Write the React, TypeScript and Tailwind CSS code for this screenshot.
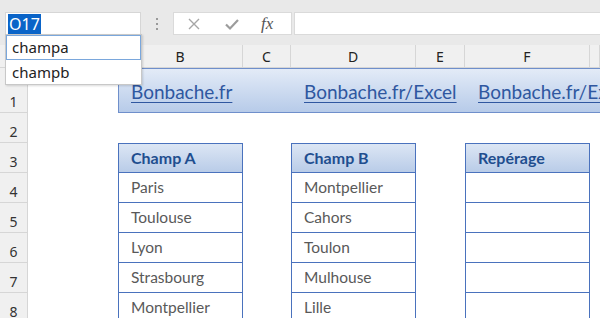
import React from 'react';

const cols = ['A', 'B', 'C', 'D', 'E', 'F', 'G'];
const widths = [90, 125, 48, 125, 49, 125, 10];

const champA = ['Paris', 'Toulouse', 'Lyon', 'Strasbourg', 'Montpellier'];
const champB = ['Montpellier', 'Cahors', 'Toulon', 'Mulhouse', 'Lille'];

const cellFont = { fontFamily: 'Lato, "Noto Sans", sans-serif' };
const uiFont = { fontFamily: '"Noto Sans", "Open Sans", sans-serif' };

function RowHead({ n, h }: { n: number; h: string }) {
  return (
    <div
      className={`w-[28px] shrink-0 ${h} bg-[#f0f0f0] border-b border-r border-[#d6d6d6] flex items-end justify-center text-[14px] leading-[20px] text-[#333]`}
      style={uiFont}
    >
      {n}
    </div>
  );
}

function TableCell({ text, head }: { text?: string; head?: boolean }) {
  if (head) {
    return (
      <div className="w-[125px] h-[30px] border border-[#4a72bd] bg-gradient-to-b from-[#dce6f4] to-[#b9cce8] flex items-center pl-[12px] text-[16px] font-bold text-[#1f4e8f]">
        {text}
      </div>
    );
  }
  return (
    <div className="w-[125px] h-[30px] border-x border-b border-[#4a72bd] flex items-center pl-[12px] text-[15.5px] text-[#595959]">
      {text}
    </div>
  );
}

function Gap({ w }: { w: number }) {
  return <div className="shrink-0" style={{ width: w }} />;
}

export default function App() {
  return (
    <div className="w-[600px] h-[318px] overflow-hidden bg-white relative">
      {/* formula bar */}
      <div className="h-[45px] bg-[#e9e9e9] flex items-start pt-[12px] pl-[5px]">
        <div className="w-[136px] h-[23px] bg-white border border-[#d6d6d6] flex items-center pl-[2px]">
          <span className="bg-[#0a64c8] text-white text-[16px] leading-[20px] px-[1px]" style={uiFont}>
            O17
          </span>
        </div>
        <div className="w-[32px] h-[23px] flex flex-col items-center justify-center gap-[3px]">
          <div className="w-[2px] h-[2px] bg-[#9a9a9a]" />
          <div className="w-[2px] h-[2px] bg-[#9a9a9a]" />
          <div className="w-[2px] h-[2px] bg-[#9a9a9a]" />
        </div>
        <div className="w-[119px] h-[23px] bg-white border border-[#dadada] flex items-center">
          <svg width="14" height="14" viewBox="0 0 14 14" className="ml-[13px]">
            <path d="M2 2 L12 12 M12 2 L2 12" stroke="#a6a6a6" strokeWidth="1.4" fill="none" />
          </svg>
          <svg width="16" height="14" viewBox="0 0 16 14" className="ml-[23px]">
            <path d="M2 7.5 L6 11.5 L14 3" stroke="#9c9c9c" strokeWidth="2.2" fill="none" />
          </svg>
          <span className="ml-[21px] text-[17px] italic text-[#555]" style={{ fontFamily: '"Liberation Serif", serif' }}>
            fx
          </span>
        </div>
        <div className="ml-[2px] flex-1 h-[23px] bg-white border-y border-l border-[#dadada]" />
      </div>

      {/* column headers */}
      <div className="flex h-[23px] bg-[#f0f0f0] border-b border-[#d6d6d6]" style={uiFont}>
        <div className="w-[28px] shrink-0 border-r border-[#d6d6d6]" />
        {cols.map((c, i) => (
          <div
            key={c}
            className="shrink-0 border-r border-[#d6d6d6] flex items-center justify-center text-[14px] text-[#222]"
            style={{ width: widths[i] }}
          >
            {c === 'G' ? '' : c}
          </div>
        ))}
      </div>

      {/* row 1 */}
      <div className="flex" style={cellFont}>
        <RowHead n={1} h="h-[45px]" />
        <Gap w={90} />
        <div className="flex-1 h-[45px] border border-r-0 border-[#6f8fcb] bg-gradient-to-b from-[#e3ebf7] to-[#b7cbe9] flex text-[19px] text-[#2f57a0] underline underline-offset-[3px] overflow-hidden">
          <div className="w-[173px] shrink-0 pl-[12px] pt-[9px]">Bonbache.fr</div>
          <div className="w-[174px] shrink-0 pl-[12px] pt-[9px]">Bonbache.fr/Excel</div>
          <div className="shrink-0 pl-[12px] pt-[9px] whitespace-nowrap">Bonbache.fr/Excel</div>
        </div>
      </div>

      {/* row 2 */}
      <div className="flex" style={cellFont}>
        <RowHead n={2} h="h-[30px]" />
      </div>

      {/* row 3 headers */}
      <div className="flex" style={cellFont}>
        <RowHead n={3} h="h-[30px]" />
        <Gap w={90} />
        <TableCell text="Champ A" head />
        <Gap w={48} />
        <TableCell text="Champ B" head />
        <Gap w={49} />
        <TableCell text="Repérage" head />
      </div>

      {champA.map((a, i) => (
        <div key={a} className="flex" style={cellFont}>
          <RowHead n={i + 4} h="h-[30px]" />
          <Gap w={90} />
          <TableCell text={a} />
          <Gap w={48} />
          <TableCell text={champB[i]} />
          <Gap w={49} />
          <TableCell />
        </div>
      ))}

      {/* name box dropdown */}
      <div className="absolute left-[5px] top-[34px] w-[137px] bg-white border border-[#c8c8c8] shadow-[1px_1px_2px_rgba(0,0,0,0.15)] text-[15px] text-[#222]" style={uiFont}>
        <div className="h-[25px] border border-[#7aa7dc] flex items-center pl-[5px]">champa</div>
        <div className="h-[24px] flex items-center pl-[6px]">champb</div>
      </div>
    </div>
  );
}
